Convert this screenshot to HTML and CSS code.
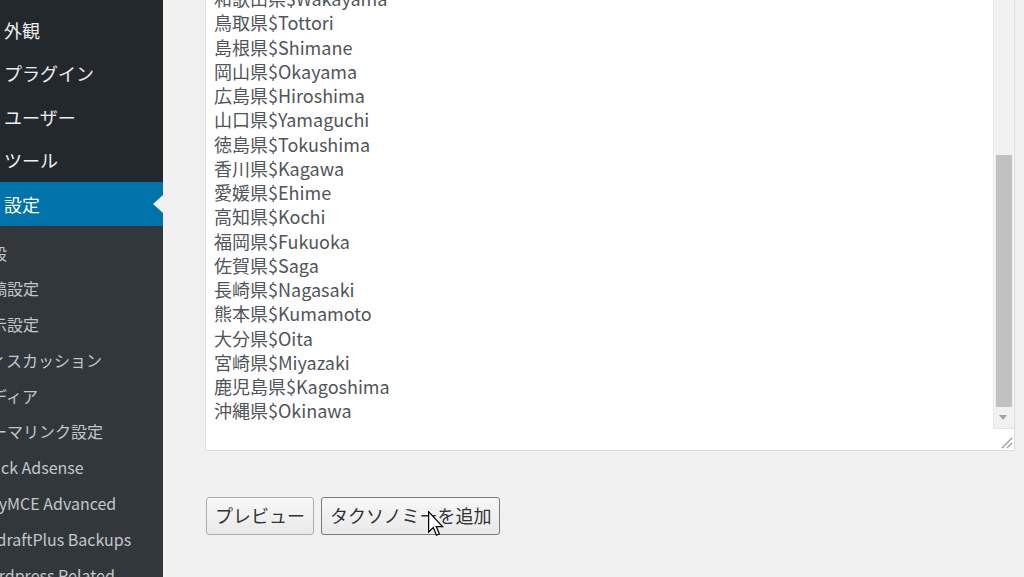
FILE: index.html
```html
<!DOCTYPE html>
<html lang="ja">
<head>
    <meta charset="UTF-8">
    <meta name="viewport" content="width=device-width, initial-scale=1.0">
    <title>タクソノミーを追加</title>
    <link rel="stylesheet" href="styles.css">
</head>
<body>
    <div class="adminmenu">
        <ul class="menu">
            <li>外観</li>
            <li>プラグイン</li>
            <li>ユーザー</li>
            <li>ツール</li>
            <li class="current">設定</li>
        </ul>
        <ul class="submenu">
            <li>一般</li>
            <li>投稿設定</li>
            <li>表示設定</li>
            <li>ディスカッション</li>
            <li>メディア</li>
            <li>パーマリンク設定</li>
            <li>Quick Adsense</li>
            <li>TinyMCE Advanced</li>
            <li>UpdraftPlus Backups</li>
            <li>Wordpress Related Posts</li>
        </ul>
    </div>

    <div class="content">
        <div class="textbox">
            <div class="lines">
                <div>和歌山県$Wakayama</div>
                <div>鳥取県$Tottori</div>
                <div>島根県$Shimane</div>
                <div>岡山県$Okayama</div>
                <div>広島県$Hiroshima</div>
                <div>山口県$Yamaguchi</div>
                <div>徳島県$Tokushima</div>
                <div>香川県$Kagawa</div>
                <div>愛媛県$Ehime</div>
                <div>高知県$Kochi</div>
                <div>福岡県$Fukuoka</div>
                <div>佐賀県$Saga</div>
                <div>長崎県$Nagasaki</div>
                <div>熊本県$Kumamoto</div>
                <div>大分県$Oita</div>
                <div>宮崎県$Miyazaki</div>
                <div>鹿児島県$Kagoshima</div>
                <div>沖縄県$Okinawa</div>
            </div>
            <div class="scrollbar">
                <div class="track">
                    <div class="thumb"></div>
                </div>
                <div class="arrow-down"></div>
                <div class="resizer">
                    <svg width="21" height="21" viewBox="0 0 21 21">
                        <line x1="9" y1="19" x2="19" y2="9" stroke="#9a9a9a" stroke-width="1.2"/>
                        <line x1="14" y1="19" x2="19" y2="14" stroke="#9a9a9a" stroke-width="1.2"/>
                    </svg>
                </div>
            </div>
        </div>

        <div class="buttons">
            <button class="btn">プレビュー</button>
            <button class="btn btn-focus">タクソノミーを追加
                <svg class="cursor" width="16" height="26" viewBox="0 0 13 21">
                    <path d="M0.5 0.5 L0.5 17 L4.3 13.4 L6.9 19.6 L9.2 18.6 L6.7 12.6 L11.8 12.6 Z" fill="#fff" stroke="#000" stroke-width="1"/>
                </svg>
            </button>
        </div>
    </div>
</body>
</html>
```

FILE: styles.css
```css
body {
    margin: 0;
    display: flex;
    height: 577px;
    overflow: hidden;
    background-color: #f1f1f1;
    font-family: "Noto Sans CJK JP", "Noto Sans", sans-serif;
}
ul {
    list-style: none;
    margin: 0;
    padding: 0;
}
.adminmenu {
    width: 163px;
    flex-shrink: 0;
    background-color: #32373c;
    overflow: hidden;
}
.menu {
    background-color: #23282d;
    padding-top: 8px;
}
.menu li {
    height: 43.5px;
    display: flex;
    align-items: center;
    padding-left: 4px;
    font-size: 18px;
    color: #eeeeee;
    white-space: nowrap;
}
.menu li.current {
    position: relative;
    background-color: #0073aa;
    color: #ffffff;
}
.menu li.current::after {
    content: "";
    position: absolute;
    right: 0;
    top: 50%;
    margin-top: -9px;
    border-style: solid;
    border-width: 9px 10px 9px 0;
    border-color: transparent #f1f1f1 transparent transparent;
}
.submenu {
    padding-top: 10px;
}
.submenu li {
    height: 35.8px;
    line-height: 35.8px;
    width: 160px;
    margin-left: -25px;
    font-size: 16px;
    color: #c3c6c9;
}
.content {
    flex: 1;
    padding: 0 9px 0 42px;
}
.textbox {
    display: flex;
    height: 490px;
    margin-top: -39px;
    box-sizing: border-box;
    background: #ffffff;
    border: 1px solid #dddddd;
}
.lines {
    flex: 1;
    padding: 24px 0 0 8px;
    font-size: 18px;
    line-height: 24.25px;
    color: #50555a;
    overflow: hidden;
}
.scrollbar {
    width: 21px;
    display: flex;
    flex-direction: column;
    background-color: #f1f1f1;
    border-left: 1px solid #e8e8e8;
    box-sizing: border-box;
}
.track {
    flex: 1;
    padding: 0 2px;
}
.thumb {
    margin-top: 193px;
    height: 252px;
    background-color: #c1c1c1;
}
.arrow-down {
    height: 22px;
    position: relative;
}
.arrow-down::after {
    content: "";
    position: absolute;
    left: 5px;
    top: 8px;
    border-style: solid;
    border-width: 5px 4px 0 4px;
    border-color: #a3a3a3 transparent transparent transparent;
}
.resizer {
    height: 21px;
    background: #ffffff;
    border-top: 1px solid #e4e4e4;
    margin-left: -1px;
}
.resizer svg {
    display: block;
}
.buttons {
    display: flex;
    gap: 7px;
    margin-top: 46px;
    padding-left: 1px;
}
.btn {
    position: relative;
    height: 38px;
    padding: 0 8px 2px;
    font-family: "Noto Sans CJK JP", "Noto Sans", sans-serif;
    font-size: 18px;
    color: #333333;
    background: linear-gradient(#f8f8f8, #e9e9e9);
    border: 1px solid #acacac;
    border-radius: 3px;
}
.btn-focus {
    border-color: #7a7a7a;
}
.cursor {
    position: absolute;
    left: 106px;
    top: 13px;
}
```
